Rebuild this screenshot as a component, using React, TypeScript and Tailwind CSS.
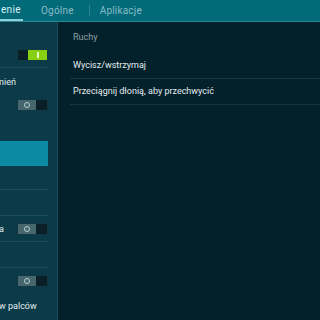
const font = { fontFamily: "Roboto, 'Noto Sans', sans-serif" };

function Toggle({ on }: { on?: boolean }) {
  if (on) {
    return (
      <div className="flex h-[12px] w-[31px] border border-[#123642]">
        <div className="w-[10px] bg-[#0a1f27]" />
        <div className="flex flex-1 items-center justify-center bg-[#86d012]">
          <div className="h-[6px] w-[2px] bg-[#e9f7c8]" />
        </div>
      </div>
    );
  }
  return (
    <div className="flex h-[12px] w-[31px] border border-[#123642]">
      <div className="flex w-[18px] items-center justify-center bg-[#47676f]">
        <div className="h-[6px] w-[6px] rounded-full border border-[#b9ccd0]" />
      </div>
      <div className="flex-1 bg-[#0a1f27]" />
    </div>
  );
}

export default function App() {
  return (
    <div className="flex h-[320px] w-[320px] flex-col overflow-hidden bg-[#03212b]" style={font}>
      <header className="flex h-[22px] shrink-0 items-stretch border-b border-[#2b8796] bg-[#036a7a] text-[10px]">
        <div className="flex w-[23px] flex-col justify-center">
          <span className="ml-[1px] mt-[2px] tracking-[0.3px] text-[#dcf0f2]">enie</span>
          <div className="mt-auto h-[2px] bg-[#8fd0da]" />
        </div>
        <div className="ml-[18px] flex items-center tracking-[0.2px] text-[#86bcc6]">Ogólne</div>
        <div className="ml-[15px] my-[5px] w-px bg-[#2f8390]" />
        <div className="ml-[10px] flex items-center tracking-[0.2px] text-[#86bcc6]">Aplikacje</div>
      </header>

      <div className="flex flex-1">
        <aside className="w-[58px] shrink-0 overflow-hidden border-r border-[#1d4b59] bg-[#0b3a49] text-[9px] text-[#e2eef0]">
          <div className="mr-[9px] flex h-[46px] items-end justify-end border-b border-[#1f4d5a] pb-[6px]">
            <Toggle on />
          </div>
          <div className="flex h-[122px] flex-col border-b border-[#1f4d5a] mr-[9px]">
            <div className="mt-[8px] -ml-[1px] whitespace-nowrap leading-[12px]">nień</div>
            <div className="mt-[11px] flex justify-end">
              <Toggle />
            </div>
            <div className="mt-[30px] h-[25px] bg-[#0c8aa4]" />
          </div>
          <div className="mr-[9px] h-[26px] border-b border-[#1f4d5a]" />
          <div className="mr-[9px] flex h-[26px] items-center justify-between border-b border-[#1f4d5a]">
            <span className="-ml-[1px] leading-[12px]">a</span>
            <Toggle />
          </div>
          <div className="mr-[9px] h-[26px] border-b border-[#1f4d5a]" />
          <div className="mr-[9px] mt-[7px] flex justify-end">
            <Toggle />
          </div>
          <div className="mt-[13px] -ml-[1px] whitespace-nowrap leading-[12px]">w palców</div>
        </aside>

        <main className="flex-1 pl-[12px] text-[9px]">
          <div className="pl-[3px] pt-[9px] leading-[12px] text-[#8fa2a7]">Ruchy</div>
          <div className="mt-[10px] flex h-[26px] items-center border-b border-[#17353f] pl-[3px] text-[#e6eef0]">
            Wycisz/wstrzymaj
          </div>
          <div className="flex h-[26px] items-center border-b border-[#17353f] pl-[3px] text-[#e6eef0]">
            Przeciągnij dłonią, aby przechwycić
          </div>
        </main>
      </div>
    </div>
  );
}
